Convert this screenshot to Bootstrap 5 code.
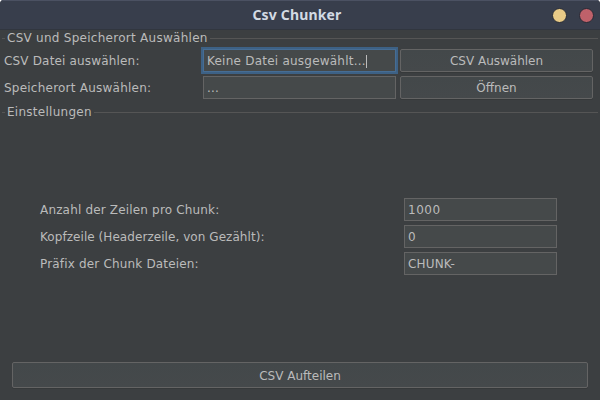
<!DOCTYPE html>
<html lang="de">
<head>
<meta charset="utf-8">
<title>Csv Chunker</title>
<link href="https://cdn.jsdelivr.net/npm/bootstrap@5.3.0/dist/css/bootstrap.min.css" rel="stylesheet">
<style>
body{background:#fff;font:12px/14px "DejaVu Sans",sans-serif;color:#bbb;letter-spacing:.17px}
.app-window{width:600px;height:400px;background:#3c3f41;border-radius:4px 4px 0 0}
.titlebar{height:30px;background:#383e4c;border-top:1px solid #4b5162;border-bottom:1px solid #31363f;display:grid;grid-template-columns:1fr auto 1fr;padding-right:6px}
.window-title{font:bold 14px/28px "Noto Sans",sans-serif;color:#d3dae3}
.dot{width:15px;height:15px;border-radius:50%;border:1px solid #262a35}
.dot-min{background:#e9cb87}.dot-close{background:#bf616a}
.group-title{height:16px;padding:0 2px;gap:2px;letter-spacing:.27px}
.group-title.second{margin-top:5px}
.group-title::before{content:"";width:3px;height:1px;background:#555}
.group-title::after{content:"";flex:1;height:1px;background:#555}
.group-title span,.row-label{white-space:nowrap}
.files-grid{display:grid;grid-template-columns:195px 193px 193px;column-gap:4px;row-gap:4px;padding:3px 0 0 4px}
.opts-grid{display:grid;grid-template-columns:364px 153px;row-gap:4px;padding:78px 0 0 40px}
.files-grid .form-control,.opts-grid .form-control{height:23px;padding:1px 3px 0;background:#45494a;border:1px solid #646464;border-radius:0;color:#bbb;font-size:12px;line-height:21px}
.files-grid .form-control.is-focus{border-color:#466d94;box-shadow:0 0 0 2px #3d6185}
.wide{letter-spacing:.23px}
.narrow{letter-spacing:.06px}
.digits{letter-spacing:.5px}
.caret{width:1px;height:13px;background:#bbb}
.btn.tool{height:23px;padding:1px 0 0;font-size:12px;line-height:21px;color:#bbb;background:linear-gradient(#43484a,#45494b);border:1px solid #646464;border-radius:2px;box-shadow:0 1px 0 #36393a}
.btn.run{height:26px;line-height:24px;margin:0 12px 12px}
</style>
<script src="https://cdn.jsdelivr.net/npm/bootstrap@5.3.0/dist/js/bootstrap.bundle.min.js"></script>
</head>
<body class="overflow-hidden">
<div class="app-window d-flex flex-column overflow-hidden">
  <header class="titlebar">
    <span></span><span class="window-title">Csv Chunker</span>
    <div class="d-flex align-items-center justify-content-end gap-2"><span class="dot dot-min"></span><span class="dot dot-close ms-1"></span></div>
  </header>
  <div class="group-title d-flex align-items-center"><span>CSV und Speicherort Auswählen</span></div>
  <section class="files-grid align-items-center">
    <label class="row-label">CSV Datei auswählen:</label>
    <div class="form-control is-focus wide d-flex align-items-center">Keine Datei ausgewählt...<span class="caret"></span></div>
    <button class="btn tool">CSV Auswählen</button>
    <label class="row-label wide">Speicherort Auswählen:</label>
    <div class="form-control wide">...</div>
    <button class="btn tool">Öffnen</button>
  </section>
  <div class="group-title second d-flex align-items-center"><span>Einstellungen</span></div>
  <section class="opts-grid align-items-center">
    <label class="row-label">Anzahl der Zeilen pro Chunk:</label><div class="form-control digits">1000</div>
    <label class="row-label narrow">Kopfzeile (Headerzeile, von Gezählt):</label><div class="form-control digits">0</div>
    <label class="row-label">Präfix der Chunk Dateien:</label><div class="form-control">CHUNK-</div>
  </section>
  <button class="btn tool run mt-auto">CSV Aufteilen</button>
</div>
</body>
</html>
